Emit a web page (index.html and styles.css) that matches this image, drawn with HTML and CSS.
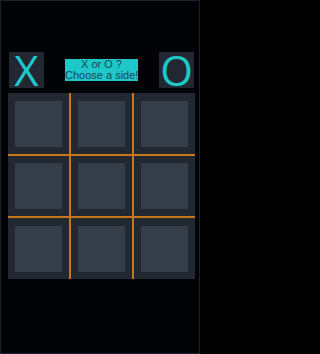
FILE: index.html
```html
<!DOCTYPE html>
<html>
<head>
<meta charset="utf-8">
<link rel="stylesheet" href="styles.css">
</head>
<body>
<div class="page">
  <div class="header">
    <div class="side">X</div>
    <div class="label">X or O ?<br>Choose a side!</div>
    <div class="side">O</div>
  </div>
  <div class="board">
    <div class="cell c-r c-b"><div class="inner"></div></div>
    <div class="cell c-r c-b"><div class="inner"></div></div>
    <div class="cell c-b"><div class="inner"></div></div>
    <div class="cell c-r c-b"><div class="inner"></div></div>
    <div class="cell c-r c-b"><div class="inner"></div></div>
    <div class="cell c-b"><div class="inner"></div></div>
    <div class="cell c-r"><div class="inner"></div></div>
    <div class="cell c-r"><div class="inner"></div></div>
    <div class="cell"><div class="inner"></div></div>
  </div>
</div>
</body>
</html>
```
FILE: styles.css
```css
html, body {
  margin: 0;
  padding: 0;
  background: #000;
}
.page {
  box-sizing: border-box;
  width: 200px;
  height: 354px;
  border: 1px solid #1a2130;
  background: #020304;
  font-family: "Liberation Sans", Arial, sans-serif;
  overflow: hidden;
}
.header {
  display: flex;
  align-items: center;
  gap: 21px;
  padding-left: 8px;
  margin-top: 51px;
  height: 36px;
}
.side {
  width: 35px;
  height: 36px;
  background: #212831;
  color: #1ec8c8;
  font-family: "Open Sans", sans-serif;
  font-weight: 400;
  font-size: 42px;
  line-height: 36px;
  text-align: center;
}
.label {
  width: 73px;
  height: 22px;
  background: #1ec8c8;
  color: #194653;
  font-size: 11px;
  line-height: 11px;
  text-align: center;
  white-space: nowrap;
}
.board {
  margin-top: 5px;
  margin-left: 7px;
  width: 187px;
  height: 186px;
  display: grid;
  grid-template-columns: 63px 63px 61px;
  grid-template-rows: 63px 62px 61px;
  background: #212831;
}
.cell {
  box-sizing: border-box;
  display: flex;
  align-items: center;
  justify-content: center;
}
.c-r {
  border-right: 2px solid #c8761a;
}
.c-b {
  border-bottom: 2px solid #c8761a;
}
.inner {
  width: 47px;
  height: 46px;
  background: #343d48;
}
```
